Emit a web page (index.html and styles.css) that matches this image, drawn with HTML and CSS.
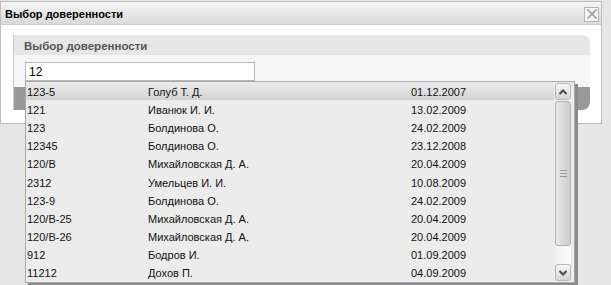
FILE: index.html
```html
<!DOCTYPE html>
<html lang="ru">
<head>
  <meta charset="UTF-8">
  <title>Выбор доверенности</title>
  <link rel="stylesheet" href="styles.css">
</head>
<body>
  <div class="window">
    <div class="titlebar">
      <span class="title">Выбор доверенности</span>
      <button type="button" class="close">
        <svg width="12" height="12" viewBox="0 0 12 12"><path d="M1.5 1.5L10.5 10.5M10.5 1.5L1.5 10.5" stroke="#9a9a9a" stroke-width="1.6" fill="none"/></svg>
      </button>
    </div>
    <div class="window-body">
      <div class="panel">
        <div class="panel-head">Выбор доверенности</div>
        <div class="panel-body">
          <input type="text" class="search" value="12">
        </div>
        <div class="panel-foot"></div>
      </div>
    </div>
  </div>

  <div class="dropdown">
    <ul class="list">
      <li class="row active"><span>123-5</span><span>Голуб Т. Д.</span><span>01.12.2007</span></li>
      <li class="row"><span>121</span><span>Иванюк И. И.</span><span>13.02.2009</span></li>
      <li class="row"><span>123</span><span>Болдинова О.</span><span>24.02.2009</span></li>
      <li class="row"><span>12345</span><span>Болдинова О.</span><span>23.12.2008</span></li>
      <li class="row"><span>120/В</span><span>Михайловская Д. А.</span><span>20.04.2009</span></li>
      <li class="row"><span>2312</span><span>Умельцев И. И.</span><span>10.08.2009</span></li>
      <li class="row"><span>123-9</span><span>Болдинова О.</span><span>24.02.2009</span></li>
      <li class="row"><span>120/В-25</span><span>Михайловская Д. А.</span><span>20.04.2009</span></li>
      <li class="row"><span>120/В-26</span><span>Михайловская Д. А.</span><span>20.04.2009</span></li>
      <li class="row"><span>912</span><span>Бодров И.</span><span>01.09.2009</span></li>
      <li class="row"><span>11212</span><span>Дохов П.</span><span>04.09.2009</span></li>
    </ul>
    <div class="scrollbar">
      <div class="sb-btn">
        <svg width="10" height="8" viewBox="0 0 10 8"><path d="M1.5 6L5 2.5L8.5 6" stroke="#4a4a4a" stroke-width="2" fill="none"/></svg>
      </div>
      <div class="sb-track">
        <div class="sb-thumb"><span class="grip"></span></div>
      </div>
      <div class="sb-btn">
        <svg width="10" height="8" viewBox="0 0 10 8"><path d="M1.5 2L5 5.5L8.5 2" stroke="#4a4a4a" stroke-width="2" fill="none"/></svg>
      </div>
    </div>
  </div>
</body>
</html>
```

FILE: styles.css
```css
body {
  margin: 0;
  height: 285px;
  background: #e6e6e6;
  font-family: "Liberation Sans", Arial, sans-serif;
  font-size: 11px;
  color: #111;
  overflow: hidden;
}
.window {
  width: 600px;
  margin-top: 1px;
  border: 1px solid #bdbdbd;
  background: #fff;
}
.titlebar {
  box-sizing: border-box;
  height: 23px;
  display: flex;
  align-items: center;
  justify-content: space-between;
  padding: 2px 2px 0 4px;
  border-bottom: 1px solid #cfcfcf;
  background: linear-gradient(#f5f5f5, #dadada);
}
.title {
  font-weight: bold;
  color: #000;
}
.close {
  width: 15px;
  height: 15px;
  padding: 0;
  display: flex;
  align-items: center;
  justify-content: center;
  border: 1px solid #b3b3b3;
  background: #f4f4f4;
}
.window-body {
  padding: 10px 11px 13px 12px;
}
.panel {
  border-left: 1px solid #cdcdcd;
  border-radius: 0 8px 8px 0;
  overflow: hidden;
}
.panel-head {
  height: 20px;
  line-height: 22px;
  padding-left: 10px;
  background: #e6e6e6;
  font-weight: bold;
  font-size: 11.5px;
  color: #555;
}
.panel-body {
  height: 25px;
  padding: 7px 0 0 11px;
  background: #f6f6f6;
}
.search {
  box-sizing: border-box;
  width: 230px;
  height: 19px;
  margin: 0;
  padding: 0 3px;
  border: 1px solid #b9b9b9;
  font-family: "Liberation Sans", Arial, sans-serif;
  font-size: 12px;
  color: #000;
}
.panel-foot {
  height: 23px;
  background: #999;
}

/* выпадающий список поверх окна */
.dropdown {
  position: absolute;
  left: 25px;
  top: 81px;
  width: 548px;
  height: 200px;
  display: flex;
  border: 1px solid #a9a9a9;
  background: #ececec;
  box-shadow: 3px 3px 0 #8a8a8a;
}
.list {
  flex: 1;
  margin: 0;
  padding: 0;
  list-style: none;
}
.row {
  box-sizing: border-box;
  height: 18.1px;
  display: grid;
  grid-template-columns: 121px 263px 1fr;
  align-items: center;
  padding: 2px 0 0 1px;
}
.row.active {
  background: linear-gradient(#ececec, #d3d3d3);
}
.scrollbar {
  width: 16px;
  margin: 1px 3px 1px 1px;
  display: flex;
  flex-direction: column;
}
.sb-btn {
  box-sizing: border-box;
  height: 17px;
  display: flex;
  align-items: center;
  justify-content: center;
  border: 1px solid #b8b8b8;
  border-radius: 3px;
  background: linear-gradient(#f6f6f6, #d6d6d6);
}
.sb-track {
  flex: 1;
  display: flex;
  flex-direction: column;
  background: linear-gradient(90deg, #f0f0f0, #fcfcfc);
}
.sb-thumb {
  box-sizing: border-box;
  height: 145px;
  margin-top: 1px;
  display: flex;
  align-items: flex-end;
  justify-content: center;
  padding-bottom: 68px;
  border: 1px solid #b2b2b2;
  border-radius: 3px;
  background: linear-gradient(90deg, #e9e9e9, #cccccc);
}
.grip {
  width: 7px;
  height: 5px;
  border-top: 1px solid #9a9a9a;
  border-bottom: 1px solid #9a9a9a;
  background: linear-gradient(#fff0 2px, #9a9a9a 2px, #9a9a9a 3px, #fff0 3px);
}
```
